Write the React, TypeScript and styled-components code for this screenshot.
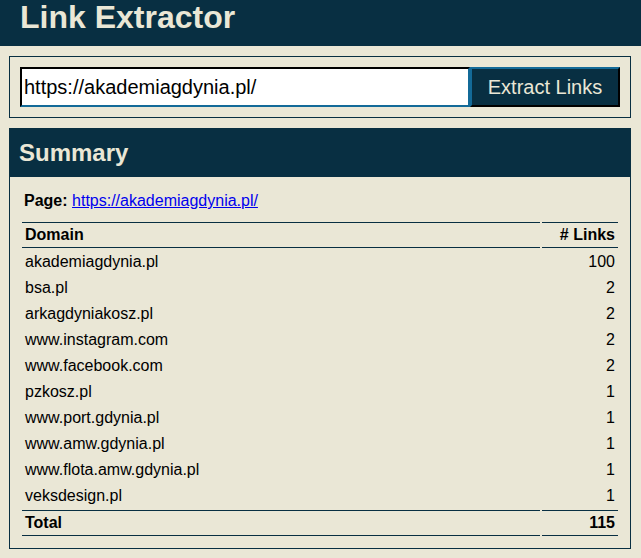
import React from "react";
import styled, { createGlobalStyle } from "styled-components";

const navy = "#082f42";
const teal = "#136a98";
const cream = "#eae7d6";

const GlobalStyle = createGlobalStyle`
  * { box-sizing: border-box; }
  body {
    margin: 0;
    background: ${cream};
    color: #000;
    font: 16px/18px "Liberation Sans", Arial, sans-serif;
  }
`;

const Header = styled.header`
  padding: 0 20px 11px;
  background: ${navy};
  color: ${cream};
`;

const Title = styled.h1`
  margin: 0;
  font-size: 32px;
  line-height: 35px;
`;

const Main = styled.main`
  display: flex;
  flex-direction: column;
  gap: 10px;
  padding: 10px 10px 9px 9px;
`;

const SearchForm = styled.form`
  display: flex;
  padding: 10px;
  border: 1px solid ${navy};
`;

const UrlInput = styled.input`
  flex: 1;
  min-width: 0;
  height: 40px;
  margin: 0;
  padding: 0 2px;
  border: 2px solid;
  border-color: #000 ${teal} ${teal} #000;
  border-radius: 0;
  outline: none;
  background: #fff;
  color: #000;
  font: inherit;
  font-size: 20px;
`;

const SubmitButton = styled.button`
  min-width: 150px;
  height: 40px;
  padding: 0 10px;
  border: 2px solid;
  border-color: ${teal} #000 #000 ${teal};
  border-radius: 0;
  background: ${navy};
  color: ${cream};
  font: inherit;
  font-size: 20px;
  white-space: nowrap;
`;

const Panel = styled.section`
  border: 1px solid ${navy};
`;

const PanelTitle = styled.h2`
  margin: 0;
  padding: 10px 9px;
  background: ${navy};
  color: ${cream};
  font-size: 24px;
  line-height: 28px;
`;

const PanelBody = styled.div`
  padding: 10px;
`;

const PageLine = styled.p`
  margin: 0;
  padding: 5px 4px 10px;
`;

const PageLink = styled.a`
  color: #00e;
`;

const DomainTable = styled.table`
  width: 100%;
  border-spacing: 2px;
`;

const Cell = styled.td<{ $numeric?: boolean }>`
  padding: 3px;
  text-align: ${(p) => (p.$numeric ? "right" : "left")};
`;

const RuledCell = styled.th<{ $numeric?: boolean }>`
  padding: 3px;
  border: solid ${navy};
  border-width: 1px 0;
  text-align: ${(p) => (p.$numeric ? "right" : "left")};
  ${(p) => p.$numeric && "width: 76px;"}
`;

const pageUrl = "https://akademiagdynia.pl/";

const domains: [string, number][] = [
  ["akademiagdynia.pl", 100],
  ["bsa.pl", 2],
  ["arkagdyniakosz.pl", 2],
  ["www.instagram.com", 2],
  ["www.facebook.com", 2],
  ["pzkosz.pl", 1],
  ["www.port.gdynia.pl", 1],
  ["www.amw.gdynia.pl", 1],
  ["www.flota.amw.gdynia.pl", 1],
  ["veksdesign.pl", 1],
];

const total = 115;

export default function App() {
  return (
    <>
      <GlobalStyle />
      <Header>
        <Title>Link Extractor</Title>
      </Header>
      <Main>
        <SearchForm onSubmit={(e) => e.preventDefault()}>
          <UrlInput type="text" aria-label="Page URL" defaultValue={pageUrl} spellCheck={false} />
          <SubmitButton type="submit">Extract Links</SubmitButton>
        </SearchForm>
        <Panel>
          <PanelTitle>Summary</PanelTitle>
          <PanelBody>
            <PageLine>
              <strong>Page:</strong> <PageLink href={pageUrl}>{pageUrl}</PageLink>
            </PageLine>
            <DomainTable>
              <thead>
                <tr>
                  <RuledCell scope="col">Domain</RuledCell>
                  <RuledCell scope="col" $numeric># Links</RuledCell>
                </tr>
              </thead>
              <tbody>
                {domains.map(([name, count]) => (
                  <tr key={name}>
                    <Cell>{name}</Cell>
                    <Cell $numeric>{count}</Cell>
                  </tr>
                ))}
              </tbody>
              <tfoot>
                <tr>
                  <RuledCell scope="row">Total</RuledCell>
                  <RuledCell $numeric>{total}</RuledCell>
                </tr>
              </tfoot>
            </DomainTable>
          </PanelBody>
        </Panel>
      </Main>
    </>
  );
}
